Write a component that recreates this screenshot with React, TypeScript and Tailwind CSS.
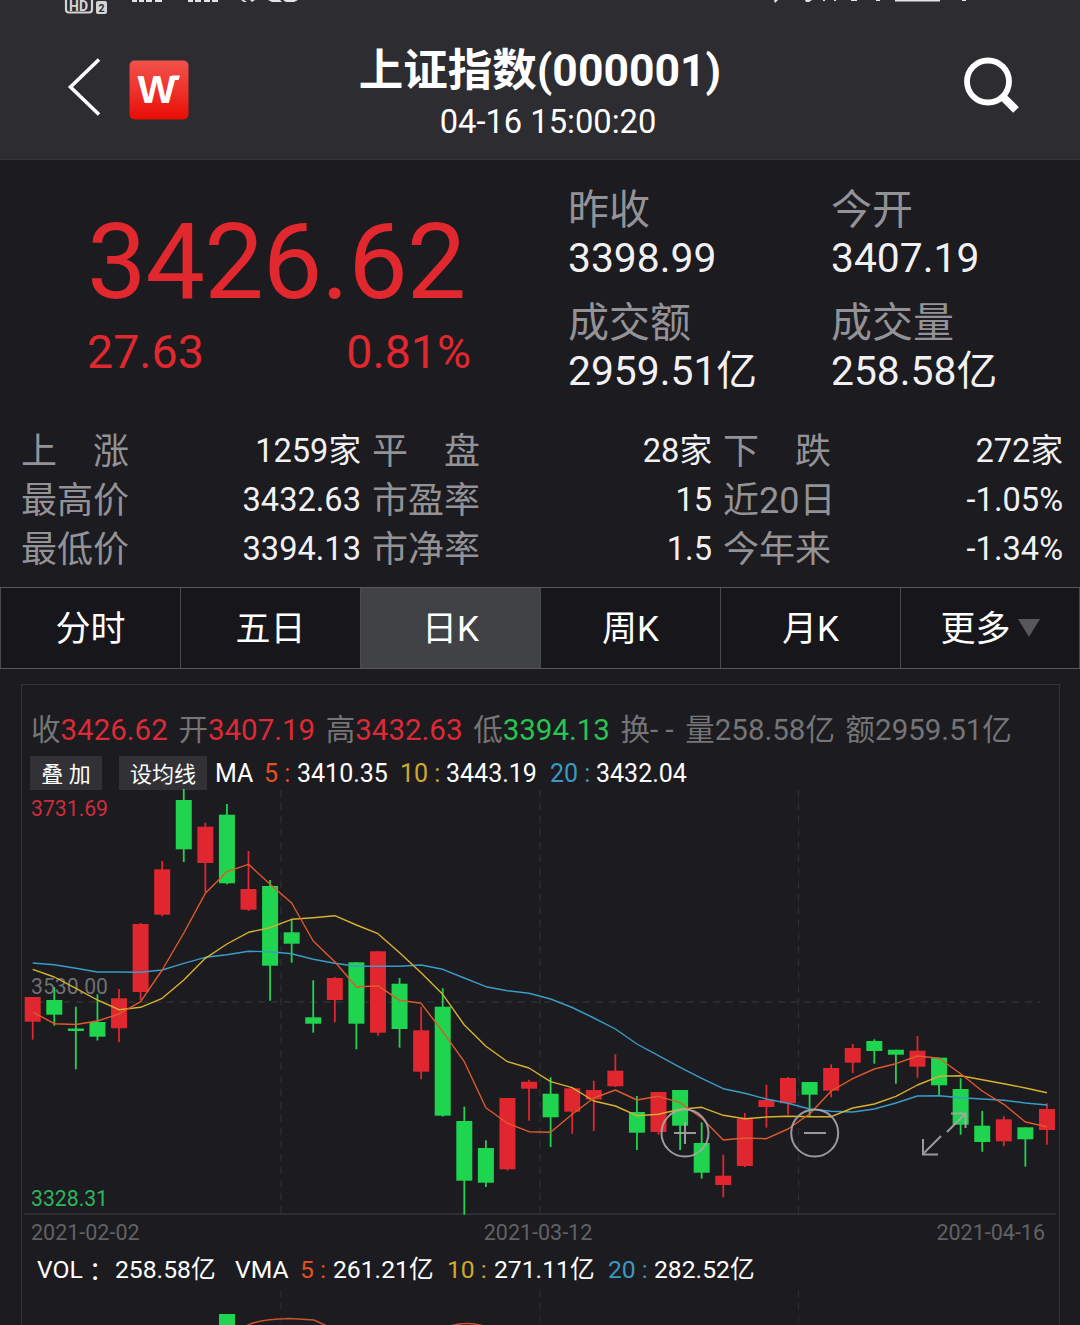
import React from 'react';
import clsx from 'clsx';

type Candle = [top: number, bottom: number, high: number, low: number, up: 0 | 1];

const STEP = 21.58;
const FIRST_X = 32.7;

// body top, body bottom, wick top, wick bottom, rising
const candles: Candle[] = [
  [997, 1021.7, 997, 1039.7, 1],
  [1000, 1014.7, 987, 1025.7, 0],
  [1028.5, 1031, 1006.7, 1069.3, 0],
  [1022, 1036.7, 994.3, 1040.5, 0],
  [998.3, 1028.3, 989, 1042.3, 1],
  [924, 992, 923, 1000, 1],
  [869.3, 914.7, 861, 916.3, 1],
  [800, 849.3, 789, 862, 0],
  [826.7, 863, 822.7, 892.3, 1],
  [814.7, 883.3, 804, 884.3, 0],
  [889, 909.7, 851, 911, 1],
  [886, 965.7, 880, 1000.7, 0],
  [932.3, 943.7, 919.3, 962.7, 0],
  [1017.3, 1023.7, 980.3, 1032.7, 0],
  [978, 1000, 977, 1022.3, 1],
  [962.3, 1023.7, 962, 1049.3, 0],
  [951.3, 1032.7, 951, 1035.7, 1],
  [983.7, 1029, 978, 1047.7, 0],
  [1030.3, 1071.7, 1006.7, 1079.3, 1],
  [1006.7, 1115.7, 988.3, 1116.7, 0],
  [1121, 1180.7, 1106.7, 1214.7, 0],
  [1148, 1182.7, 1140.3, 1187, 0],
  [1098, 1169.3, 1098, 1170.5, 1],
  [1081.7, 1088.7, 1079.7, 1120.7, 1],
  [1093.7, 1117.3, 1077.3, 1147, 0],
  [1088.3, 1111.7, 1088, 1133.7, 1],
  [1090, 1099.5, 1080.7, 1131, 1],
  [1070.7, 1086.3, 1054.3, 1087, 1],
  [1112, 1132.7, 1096, 1150, 0],
  [1092, 1132, 1092, 1134.7, 1],
  [1090, 1125.7, 1090, 1150, 0],
  [1143, 1172.7, 1122.3, 1178.7, 0],
  [1175.7, 1185, 1154.7, 1197.3, 1],
  [1118.7, 1166, 1113, 1167, 1],
  [1100, 1107, 1084.7, 1127.7, 1],
  [1078, 1103.3, 1077, 1114.7, 1],
  [1082, 1094.7, 1082, 1116.7, 0],
  [1068, 1090.7, 1064.3, 1097.3, 1],
  [1048, 1062.7, 1044, 1073, 1],
  [1041, 1051, 1039.3, 1063.7, 0],
  [1049.7, 1054.7, 1049.7, 1083.7, 0],
  [1050.7, 1066.7, 1036, 1077.7, 1],
  [1057.7, 1085.3, 1057.7, 1095, 0],
  [1089, 1124.7, 1078.3, 1134.7, 0],
  [1125.7, 1142, 1111, 1151.7, 0],
  [1119.3, 1141.3, 1116.3, 1146.3, 1],
  [1127.3, 1139.3, 1127.3, 1166.7, 0],
  [1109, 1130, 1103.3, 1144.7, 1],
];

const ma5 = [
  1012, 1023.7, 1024.5, 1021, 1014, 1001.7, 970, 933, 893.3, 871.7, 864.3, 884.3, 903, 941, 961.7, 987,
  985.7, 1000.3, 1003.3, 1031.7, 1061.7, 1107.7, 1123.3, 1131.7, 1132.3, 1114.3, 1098, 1090, 1100, 1096.3,
  1102.7, 1118, 1140, 1138, 1138.7, 1129, 1114, 1091, 1078.7, 1069, 1063.7, 1056, 1058.3, 1073.7, 1091,
  1104.3, 1122, 1126.7,
];

const ma10 = [
  969.3, 977, 988.3, 1000, 1009.7, 1007.3, 998.3, 980, 958.3, 944, 932.3, 927.7, 919.3, 917.7, 915.7, 925,
  933.7, 952.7, 972.7, 994.3, 1025, 1046.3, 1061.7, 1068, 1081.7, 1087.7, 1101, 1106, 1115.7, 1114.3,
  1109.3, 1107.3, 1115.3, 1118.7, 1117, 1116.3, 1116.7, 1116.7, 1108, 1104, 1096.3, 1085, 1076.3, 1075.7,
  1079.7, 1083.7, 1088, 1092.7,
];

const ma20 = [
  963, 964.7, 968.3, 972, 972, 972.3, 970, 963.3, 957.3, 954.7, 951.3, 951.7, 953.7, 959.3, 963.3, 966.3,
  966.3, 966.3, 965, 969.3, 978, 986.7, 990.7, 993.3, 999, 1007.5, 1018, 1029, 1044, 1055.7, 1067.3, 1078.3,
  1088.7, 1093.3, 1099, 1103.3, 1109, 1111.3, 1112, 1109, 1103, 1096, 1095.7, 1097.7, 1099, 1100.3, 1103,
  1105,
];

const toPoints = (values: number[]) =>
  values.map((y, i) => `${(FIRST_X + i * STEP).toFixed(1)},${y}`).join(' ');

const StatusBar = () => (
  <svg className="block h-[20px] w-full shrink-0" viewBox="0 0 1080 20">
    <rect x="66" y="-8" width="26" height="20.500" rx="3" fill="none" stroke="#d4d4d6" strokeWidth="2.2" />
    <text x="69" y="10.500" fontSize="14" fontWeight="700" fill="#d4d4d6" fontFamily="Roboto">HD</text>
    <rect x="96" y="1" width="11" height="13" rx="2" fill="#d4d4d6" />
    <text x="98.500" y="11.500" fontSize="10.500" fontWeight="700" fill="#2d2c30" fontFamily="Roboto">2</text>
    <g fill="#e4e4e6">
      <path d="M132 0h5v2h-5zM139 0h5v2h-5zM146 0h6v2h-6zM155 0h7v2h-7zM188 0h5v2h-5zM195 0h6v2h-6zM204 0h6v2h-6zM212 0h6v2h-6z" />
      <path d="M241 0h3l3 2h-3zM250 0h5l-3 2zM268 0h12l2 2h-10zM283 0h15l-4 2h-8z" />
      <path d="M774 0h4l-3 3zM805 0h7l-3 2h-3zM823 0h2v1h-2zM834 0h2v1h-2zM851 0h6v1h-6zM876 0h4v1h-4zM895 0h45v1.500h-45zM962 0h4v1h-4z" />
    </g>
  </svg>
);

const Header = () => (
  <header className="h-[160px] shrink-0 border-b border-[#333236] bg-[#2d2c30]">
    <StatusBar />
    <div className="grid grid-cols-[1fr_auto_1fr] items-start">
      <div className="flex pt-[37px] pl-[66px]">
        <svg className="h-[60px] w-[36px]" viewBox="0 0 36 60" fill="none" stroke="#fff" strokeWidth="3.6">
          <path d="M33 2.500 4.500 30 33 57.500" />
        </svg>
        <svg className="mt-[3px] ml-[27px] h-[60px] w-[60px]" viewBox="0 0 60 60">
          <defs>
            <linearGradient id="logo" x1="0" y1="0" x2="0" y2="1">
              <stop offset="0" stopColor="#f0524a" />
              <stop offset="0.5" stopColor="#ef322c" />
              <stop offset="1" stopColor="#e80d05" />
            </linearGradient>
          </defs>
          <rect x="0.500" y="0.500" width="59" height="59" rx="5" fill="url(#logo)" />
          <text x="8.500" y="43" fontSize="38.500" fontWeight="700" fill="#fff" fontFamily="Liberation Sans" textLength="38.500" lengthAdjust="spacingAndGlyphs">W</text>
          <path d="M43 15.500h8l-1.500 4.500h-6.500z" fill="#fff" />
        </svg>
      </div>
      <div className="flex flex-col items-center pt-[21px] text-white">
        <h1 className="text-[44.500px] leading-[60px] font-bold">上证指数(000001)</h1>
        <p className="mt-[1px] ml-[16px] text-[32.700px] leading-[40px]">04-16 15:00:20</p>
      </div>
      <div className="flex justify-end pt-[36px] pr-[60px]">
        <svg className="h-[60px] w-[58px]" viewBox="0 0 58 60" fill="none" stroke="#fff">
          <circle cx="26" cy="25.500" r="21" strokeWidth="5.8" />
          <path d="m41 41 13 13" strokeWidth="8" />
        </svg>
      </div>
    </div>
  </header>
);

const quotes = [
  { label: '昨收', value: '3398.99' },
  { label: '今开', value: '3407.19' },
  { label: '成交额', value: '2959.51亿' },
  { label: '成交量', value: '258.58亿' },
];

const Overview = () => (
  <section className="flex h-[265px] shrink-0">
    <div className="w-[568px] pt-[48px] pl-[87px] text-[#e0282e]">
      <div className="text-[106px] leading-[108px] tracking-[-1px]">3426.62</div>
      <div className="mt-[6px] flex w-[384px] justify-between text-[46.500px] leading-[60px]">
        <span>27.63</span>
        <span>0.81%</span>
      </div>
    </div>
    <div className="grid grow grid-cols-[263px_1fr] content-start gap-y-[15px] pt-[26px]">
      {quotes.map((q) => (
        <div key={q.label}>
          <div className="text-[41px] leading-[48px] text-[#939397]">{q.label}</div>
          <div className="-mt-[1px] mb-[1px] text-[40.800px] leading-[50px] text-[#f1f1f3]">{q.value}</div>
        </div>
      ))}
    </div>
  </section>
);

const stats = [
  ['上　涨', '1259家'],
  ['平　盘', '28家'],
  ['下　跌', '272家'],
  ['最高价', '3432.63'],
  ['市盈率', '15'],
  ['近20日', '-1.05%'],
  ['最低价', '3394.13'],
  ['市净率', '1.5'],
  ['今年来', '-1.34%'],
];

const Stats = () => (
  <section className="grid h-[162px] shrink-0 grid-cols-3 content-start gap-x-[11px] pt-[1px] pr-[17px] pl-[21px]">
    {stats.map(([label, value]) => (
      <div key={label} className="flex h-[49px] justify-between leading-[49px]">
        <span className="pt-[2px] text-[36px] text-[#939397]">{label}</span>
        <span className="pt-[1px] text-[32.600px] text-[#f1f1f3]">{value}</span>
      </div>
    ))}
  </section>
);

const tabs = ['分时', '五日', '日K', '周K', '月K', '更多'];

const Tabs = () => (
  <nav className="grid h-[82px] shrink-0 grid-cols-6 border-y border-[#58585c] bg-[#17161a]">
    {tabs.map((tab, i) => (
      <button
        key={tab}
        className={clsx(
          'flex items-center justify-center border-l border-[#4a4a4e] text-[35px] text-white',
          tab === '日K' && 'bg-[#414246]',
          i === 5 && 'border-r'
        )}
      >
        <span className="pt-[4px]">{tab}</span>
        {i === 5 && (
          <svg className="ml-[7px] h-[18px] w-[22px]" viewBox="0 0 22 18">
            <path d="M0 0h22L11 18z" fill="#58585b" />
          </svg>
        )}
      </button>
    ))}
  </nav>
);

const daily = [
  { label: '收', value: '3426.62', color: 'text-[#dc2a36]' },
  { label: '开', value: '3407.19', color: 'text-[#dc2a36]' },
  { label: '高', value: '3432.63', color: 'text-[#dc2a36]' },
  { label: '低', value: '3394.13', color: 'text-[#26c552]' },
  { label: '换', value: '- -', color: 'text-[#757578] mr-[1px]' },
  { label: '量', value: '258.58亿', color: 'text-[#757578]' },
  { label: '额', value: '2959.51亿', color: 'text-[#757578]' },
];

const CandleChart = () => (
  <div className="relative h-[428px]">
    <svg className="block h-[428px] w-[1037px]" viewBox="22 788 1037 428">
      <g stroke="#2f2f32" strokeWidth="1.3" strokeDasharray="7 6">
        <path d="M281 790V1214M540 790V1214M798.500 790V1214M24 1002H1040" />
      </g>
      <path d="M24 1214H1056" stroke="#343436" strokeWidth="1.3" />
    </svg>
    <span className="absolute top-[8px] left-[9px] text-[21.200px] leading-[26px] text-[#cc2d3d]">3731.69</span>
    <span className="absolute top-[186px] left-[9px] text-[21.200px] leading-[26px] text-[#707073]">3530.00</span>
    <span className="absolute top-[398px] left-[9px] text-[21.200px] leading-[26px] text-[#2eb45c]">3328.31</span>
    <svg className="absolute top-0 left-0 h-[428px] w-[1037px]" viewBox="22 788 1037 428" fill="none">
      {candles.map(([top, bottom, high, low, up], i) => {
        const x = FIRST_X + i * STEP;
        const color = up ? '#e0262e' : '#1fd44e';
        return (
          <g key={i}>
            <path d={`M${x} ${high}V${low}`} stroke={color} strokeWidth="1.8" />
            <rect x={x - 8} y={top} width="16" height={bottom - top} fill={color} />
          </g>
        );
      })}
      <g strokeWidth="1.4" strokeLinejoin="round">
        <polyline points={toPoints(ma20)} stroke="#3a9cc8" />
        <polyline points={toPoints(ma10)} stroke="#d8b130" />
        <polyline points={toPoints(ma5)} stroke="#e0592c" />
      </g>
      <g stroke="#a9a7ab" strokeWidth="2" opacity="0.9">
        <circle cx="685" cy="1133" r="23.500" />
        <path d="M674 1133h22M685 1122v22" />
        <circle cx="814.700" cy="1133" r="23.500" />
        <path d="M804 1133h22" />
        <path d="M951 1113.500h14.500v14.500M965 1114 947 1132M941 1136 923 1154M923 1139v15.500h15" />
      </g>
    </svg>
  </div>
);

const ChartPanel = () => (
  <section className="mx-[21px] mt-[15px] w-[1039px] grow overflow-hidden border border-b-0 border-[#333336]">
    <div className="mt-[23px] ml-[9px] flex gap-[10.600px] text-[29.500px] leading-[44px] whitespace-nowrap">
      {daily.map((d) => (
        <span key={d.label} className="text-[#757578]">
          {d.label}
          <span className={d.color}>{d.value}</span>
        </span>
      ))}
    </div>
    <div className="mt-[5px] ml-[8px] flex h-[31px] items-center text-[25px] whitespace-nowrap text-white">
      <button className="h-[34px] w-[72px] shrink-0 bg-[#323236] pt-[2px] text-[22px] leading-[34px]">叠 加</button>
      <button className="ml-[17px] h-[34px] w-[88px] shrink-0 bg-[#323236] pt-[2px] text-[22px] leading-[34px]">
        设均线
      </button>
      <div className="ml-[8px] flex pt-[2px]">
        <span className="w-[49px]">MA</span>
        <span className="w-[33px] text-[#e5501e]">5 :</span>
        <span className="w-[103px]">3410.35</span>
        <span className="w-[46px] text-[#cfa92c]">10 :</span>
        <span className="w-[104px]">3443.19</span>
        <span className="w-[46px] text-[#3a98c4]">20 :</span>
        <span>3432.04</span>
      </div>
    </div>
    <CandleChart />
    <div className="mt-[1px] flex justify-between pr-[14px] pl-[9px] text-[21.500px] leading-[32px] text-[#626265]">
      <span>2021-02-02</span>
      <span>2021-03-12</span>
      <span>2021-04-16</span>
    </div>
    <div className="mt-[1px] ml-[15px] flex h-[40px] text-[24.700px] leading-[40px] whitespace-nowrap text-white">
      <span className="flex w-[78px]">
        <span>VOL</span>
        <span className="font-['Noto_Sans_CJK_TC',sans-serif]" lang="zh-TW">：</span>
      </span>
      <span className="w-[120px]">258.58亿</span>
      <span className="w-[65px]">VMA</span>
      <span className="w-[33px] text-[#e5501e]">5 :</span>
      <span className="w-[114px]">261.21亿</span>
      <span className="w-[47px] text-[#cfa92c]">10 :</span>
      <span className="w-[114px]">271.11亿</span>
      <span className="w-[46px] text-[#3a98c4]">20 :</span>
      <span>282.52亿</span>
    </div>
    <svg className="block h-[36px] w-[1037px]" viewBox="22 1290 1037 36" fill="none">
      <path d="M281 1290V1326M540 1290V1326M798.500 1290V1326" stroke="#2b2b2e" strokeWidth="1.3" strokeDasharray="7 6" />
      <rect x="219" y="1314" width="16" height="12" fill="#1fd44e" />
      <path d="M246 1326Q258 1319 290 1318.500L314 1320 327 1326M450 1326Q466 1321 484 1326" stroke="#c9542e" strokeWidth="1.5" />
    </svg>
  </section>
);

export default function App() {
  return (
    <div className="flex h-[1325px] w-[1080px] flex-col overflow-hidden bg-[#1c1b1f] font-[Roboto,'Noto_Sans_CJK_SC',sans-serif]">
      <Header />
      <Overview />
      <Stats />
      <Tabs />
      <ChartPanel />
    </div>
  );
}
